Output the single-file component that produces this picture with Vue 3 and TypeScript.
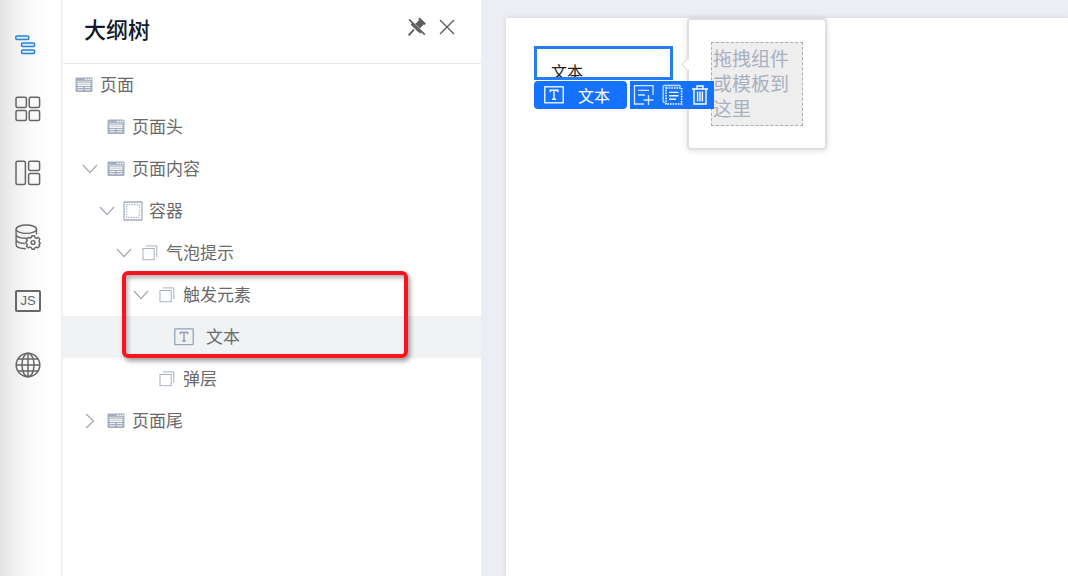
<script setup lang="ts">
interface TreeNode {
  label: string
  depth: number
  icon: 'page' | 'container' | 'block' | 'text'
  arrow?: 'open' | 'closed'
  root?: boolean
  selected?: boolean
}

const railItems = [
  { id: 'outline', label: '大纲树' },
  { id: 'components', label: '组件' },
  { id: 'layouts', label: '模板' },
  { id: 'data', label: '数据源' },
  { id: 'script', label: '脚本' },
  { id: 'locale', label: '多语言' },
]

const nodes: TreeNode[] = [
  { label: '页面', depth: 0, icon: 'page', root: true },
  { label: '页面头', depth: 0, icon: 'page' },
  { label: '页面内容', depth: 0, icon: 'page', arrow: 'open' },
  { label: '容器', depth: 1, icon: 'container', arrow: 'open' },
  { label: '气泡提示', depth: 2, icon: 'block', arrow: 'open' },
  { label: '触发元素', depth: 3, icon: 'block', arrow: 'open' },
  { label: '文本', depth: 4, icon: 'text', selected: true },
  { label: '弹层', depth: 3, icon: 'block' },
  { label: '页面尾', depth: 0, icon: 'page', arrow: 'closed' },
]

const indent = (n: TreeNode) => ({ paddingLeft: (n.root ? 11 : 17 + n.depth * 17) + 'px' })
</script>

<template>
  <div class="designer">
    <nav class="rail">
      <button v-for="item in railItems" :key="item.id" type="button" class="rail-btn" :class="{ active: item.id === 'outline' }" :aria-label="item.label">
        <svg v-if="item.id === 'outline'" width="26" height="26" viewBox="0 0 26 26">
          <g fill="#d9ecfb" stroke="currentColor" stroke-width="1.5">
            <rect x="0.8" y="4" width="13" height="3.4" rx="1" />
            <rect x="6.6" y="11" width="13" height="3.4" rx="1" />
            <rect x="6.6" y="18" width="13" height="3.4" rx="1" />
          </g>
        </svg>
        <svg v-else-if="item.id === 'components'" width="26" height="26" viewBox="0 0 26 26">
          <g fill="none" stroke="currentColor" stroke-width="1.5">
            <rect x="1" y="1.2" width="10.4" height="10.2" rx="1.5" /><rect x="14.2" y="1.2" width="10.4" height="10.2" rx="1.5" />
            <rect x="1" y="14.4" width="10.4" height="10.2" rx="1.5" /><rect x="14.2" y="14.4" width="10.4" height="10.2" rx="1.5" />
          </g>
        </svg>
        <svg v-else-if="item.id === 'layouts'" width="26" height="26" viewBox="0 0 26 26">
          <g fill="none" stroke="currentColor" stroke-width="1.5">
            <rect x="1" y="1.2" width="9.4" height="23.4" rx="1.5" />
            <rect x="13.6" y="1.2" width="11" height="9.4" rx="1.5" /><rect x="13.6" y="13.6" width="11" height="11" rx="1.5" />
          </g>
        </svg>
        <svg v-else-if="item.id === 'data'" width="26" height="26" viewBox="0 0 26 26">
          <g fill="none" stroke="currentColor" stroke-width="1.4">
            <ellipse cx="11.3" cy="5.2" rx="10.2" ry="4.2" />
            <path d="M1.1 5.2V20.5C1.1 23 5 24.6 10.8 24.7M21.5 5.2V10.5M1.1 10.3C1.5 12.8 5.5 14.3 11.5 14.3M1.1 15.4C1.5 17.8 4.8 19.4 9.8 19.5" />
            <path d="M17 11.8H19.4L20 13.6L21.5 14.3L23.2 13.5L24.8 15.2L24 16.9L24.6 18.4L25.2 19.4L23.9 20.5L24.7 22.1L23 23.8L21.3 23.1L20 23.7L19.3 25.3H17L16.3 23.7L14.9 23.1L13.3 23.9L11.6 22.2L12.4 20.5L11 19.5V17.6L12.4 16.7L11.6 15.1L13.3 13.4L14.9 14.2L16.4 13.5Z" stroke-linejoin="round" />
            <circle cx="18.1" cy="18.5" r="1.9" />
          </g>
        </svg>
        <span v-else-if="item.id === 'script'" class="js">JS</span>
        <svg v-else width="26" height="26" viewBox="0 0 26 26">
          <g fill="none" stroke="currentColor" stroke-width="1.5">
            <circle cx="13" cy="13" r="11.8" /><ellipse cx="13" cy="13" rx="6" ry="11.8" />
            <path d="M13 1.2V24.8M1.2 13H24.8M3 6.9H23M3 19.1H23" />
          </g>
        </svg>
      </button>
    </nav>

    <aside class="panel">
      <header class="panel-head">
        <h1>大纲树</h1>
        <button type="button" class="head-btn" aria-label="取消固定">
          <svg width="20" height="20" viewBox="0 0 20 20">
            <path d="M12.6 .6L18.9 6.6L17.6 8L16.5 7.5L13.2 10.9L13 14L11.6 15.4L4.3 8L5.7 6.6L8.8 6.4L12.1 3.1L11.3 2Z" fill="currentColor" />
            <path d="M7 12.6L1.6 18.4" stroke="currentColor" stroke-width="2" />
            <path d="M2.4 3.4L17.4 17.9" stroke="#fff" stroke-width="3.2" />
            <path d="M2 2.4L17.8 17.6M4.2 6.8L13.8 16" stroke="currentColor" stroke-width="1.6" />
          </svg>
        </button>
        <button type="button" class="head-btn" aria-label="关闭">
          <svg width="20" height="20" viewBox="0 0 20 20"><path d="M3 3L17 17M17 3L3 17" stroke="currentColor" stroke-width="1.4" /></svg>
        </button>
      </header>

      <ul class="tree" role="tree">
        <li v-for="n in nodes" :key="n.label" role="treeitem" class="row" :class="{ selected: n.selected }" :style="indent(n)">
          <span v-if="!n.root" class="arrow">
            <svg v-if="n.arrow" :class="n.arrow" width="16" height="16" viewBox="0 0 16 16"><path d="M1 4L8 11.6L15 4" fill="none" stroke="currentColor" stroke-width="1.2" /></svg>
          </span>
          <span class="icon">
            <svg v-if="n.icon === 'page'" width="18" height="16" viewBox="0 0 18 16">
              <rect x="0.5" y="0.5" width="17" height="14.5" rx="1" fill="#a3afbf" />
              <path d="M10 2.3H11.5M12.6 2.3H14.1M15 2.3H16.5" stroke="#fff" stroke-width="1.2" />
              <path d="M1.5 4.2H16.5" stroke="#dfe4ea" stroke-width=".8" />
              <rect x="3" y="6" width="12" height="2.6" fill="#d3d9e1" stroke="#fff" stroke-width=".8" />
              <path d="M2.6 10.5H8M9.5 10.5H15.4M2.6 12.7H8M9.5 12.7H15.4" stroke="#f1f4f7" stroke-width="1.1" />
            </svg>
            <svg v-else-if="n.icon === 'container'" width="20" height="20" viewBox="0 0 20 20">
              <rect x="1" y="1" width="18" height="18" rx=".5" fill="none" stroke="#a3afbf" stroke-width="1.3" />
              <rect x="3.6" y="3.6" width="12.8" height="12.8" fill="none" stroke="#95a2b3" stroke-width="1.1" stroke-dasharray="1.1 1.46" />
            </svg>
            <svg v-else-if="n.icon === 'block'" width="16" height="16" viewBox="0 0 16 16">
              <g fill="none" stroke="#a9b3c0" stroke-width="1"><rect x="1" y="3.5" width="11.2" height="11.2" /><path d="M3.8 .9H14.8V12" /></g>
            </svg>
            <svg v-else width="20" height="18" viewBox="0 0 20 18">
              <rect x=".8" y=".8" width="18.4" height="15.8" rx=".5" fill="none" stroke="#95a5ba" stroke-width="1.3" />
              <path d="M6.3 6.2V4.3H13.7V6.2M10 4.3V13.2M8 13.2H12" fill="none" stroke="#8797ab" stroke-width="1.3" />
            </svg>
          </span>
          <span class="label" :class="{ wide: n.icon === 'text' }">{{ n.label }}</span>
        </li>
      </ul>
      <div class="highlight"></div>
    </aside>

    <main class="stage">
      <section class="sheet">
        <div class="node"><span>文本</span></div>
        <div class="popover">
          <i class="tip"></i>
          <div class="drop">拖拽组件或模板到这里</div>
        </div>
        <div class="actions">
          <button type="button" class="tag">
            <svg width="20" height="18" viewBox="0 0 20 18">
              <rect x=".8" y=".8" width="18.4" height="16" fill="none" stroke="#fff" stroke-width="1.3" />
              <path d="M6.2 6.3V4.3H13.8V6.3M10 4.3V13.3M8 13.3H12" fill="none" stroke="#fff" stroke-width="1.4" />
            </svg>
            <span>文本</span>
          </button>
          <div class="tools">
            <button type="button" aria-label="添加">
              <svg width="22" height="22" viewBox="0 0 22 22"><path d="M11 20H1.5V1.7H20V11M5 6.3H16M5 11H12M15.5 11V21M10.5 16H20.5" fill="none" stroke="#d6e7ff" stroke-width="1.3" /></svg>
            </button>
            <button type="button" aria-label="复制">
              <svg width="22" height="22" viewBox="0 0 22 22" fill="none" stroke="#fff">
                <path d="M3 18.5H2.8Q1.2 18.5 1.2 17V3Q1.2 1.5 2.7 1.5H17Q18.4 1.5 18.4 3" stroke="#c9dfff" stroke-width="1.3" />
                <rect x="4" y="4" width="15.6" height="16" stroke-width="1.6" stroke-dasharray="1.6 1" />
                <path d="M7 8.4H16.5M7 11.8H16.5M7 15.2H14" stroke-width="1.4" />
              </svg>
            </button>
            <button type="button" aria-label="删除">
              <svg width="20" height="22" viewBox="0 0 20 22" fill="none" stroke="#fff" stroke-width="1.4"><path d="M2 5H18M7 4.5V2H13V4.5M4 5V20H16V5M7.6 7.5V17.5M10 7.5V17.5M12.4 7.5V17.5" /></svg>
            </button>
          </div>
        </div>
      </section>
    </main>
  </div>
</template>

<style>
body { margin: 0; }
</style>

<style scoped>
.designer {
  display: flex;
  min-height: 100vh;
  background: #edeef3;
  color: #6a6a6a;
  font-family: "Noto Sans CJK SC", sans-serif;
  font-size: 16px;
}
button {
  padding: 0;
  border: 0;
  background: none;
  color: inherit;
  font: inherit;
}
svg { display: block; flex: none; }
.rail {
  display: flex;
  flex-direction: column;
  flex: none;
  width: 63px;
  box-sizing: border-box;
  padding-top: 32px;
  gap: 38px;
  border-right: 2px solid #f0f1f2;
  background: linear-gradient(90deg, #e3e3e3 0, #f0f0f0 14px, #fafafa 32px, #fff 52px);
}
.rail-btn {
  display: flex;
  align-items: center;
  height: 26px;
  padding-left: 15px;
  color: #666;
}
.rail-btn.active { color: #2b83d4; }
.js {
  width: 26px;
  height: 22px;
  box-sizing: border-box;
  border: 2px solid #686868;
  border-radius: 2px;
  font: 13px/18px "Liberation Sans", sans-serif;
  text-align: center;
}
.panel {
  position: relative;
  flex: none;
  width: 418px;
  background: #fff;
}
.panel-head {
  display: flex;
  align-items: center;
  height: 64px;
  box-sizing: border-box;
  padding: 0 24px 10px 21px;
  gap: 10px;
  border-bottom: 1px solid #e6e8ea;
}
h1 {
  flex: 1;
  margin: 0;
  padding-top: 2px;
  color: #111a2c;
  font-size: 22px;
  font-weight: 500;
  line-height: 30px;
}
.head-btn { color: #5c5e62; }
.tree {
  margin: 0;
  padding: 0;
  list-style: none;
}
.row {
  display: flex;
  align-items: center;
  height: 42px;
  gap: 6px;
}
.selected { background: #f1f2f4; }
.arrow {
  display: flex;
  justify-content: center;
  width: 20px;
  color: #a0a7b0;
}
.closed { transform: rotate(-90deg); }
.icon {
  display: flex;
  justify-content: center;
  width: 20px;
}
.label {
  padding-bottom: 2px;
  font-size: 17px;
  line-height: 24px;
}
.wide { padding-left: 6px; }
.highlight {
  position: absolute;
  top: 271px;
  left: 59px;
  right: 73px;
  height: 87px;
  box-sizing: border-box;
  border: 4px solid #f5141f;
  border-radius: 6px;
  box-shadow: 2px 3px 5px rgba(0, 0, 0, .4), inset 2px 3px 4px rgba(0, 0, 0, .3);
  pointer-events: none;
}
.stage {
  flex: 1;
  display: flex;
  padding: 18px 0 0 25px;
}
.sheet {
  position: relative;
  flex: 1;
  padding: 28px;
  background: #fff;
  box-shadow: 0 0 5px rgba(80, 90, 130, .18);
}
.node {
  width: 139px;
  height: 34px;
  box-sizing: border-box;
  padding: 10px 14px 0;
  overflow: hidden;
  border: 3px solid #267cf0;
  color: #222;
  line-height: 24px;
}
.actions {
  position: absolute;
  top: 63px;
  left: 28px;
  display: flex;
  gap: 3px;
  color: #fff;
}
.tag {
  display: flex;
  align-items: center;
  width: 93px;
  height: 28px;
  padding-left: 10px;
  gap: 14px;
  border-radius: 4px;
  background: #1472ff;
  line-height: 28px;
}
.tools {
  display: flex;
  align-items: center;
  justify-content: space-between;
  width: 84px;
  height: 28px;
  box-sizing: border-box;
  padding: 0 4px 0 3px;
  background: #1472ff;
}
.popover {
  position: absolute;
  top: 0;
  left: 181px;
  box-sizing: border-box;
  width: 140px;
  padding: 22px;
  border: 2px solid #dfdfdf;
  border-radius: 4px;
  background: #fff;
  box-shadow: 0 1px 6px rgba(0, 0, 0, .12);
}
.tip {
  position: absolute;
  top: 40px;
  left: -6px;
  width: 8px;
  height: 8px;
  border: solid #dcdcdc;
  border-width: 0 0 1px 1px;
  background: #fff;
  transform: rotate(45deg);
}
.drop {
  height: 84px;
  box-sizing: border-box;
  padding: 2px 0 0 1px;
  border: 1px dashed #a9adb8;
  background: #eee;
  color: #a9b0be;
  font-size: 19px;
  line-height: 25px;
}
</style>
